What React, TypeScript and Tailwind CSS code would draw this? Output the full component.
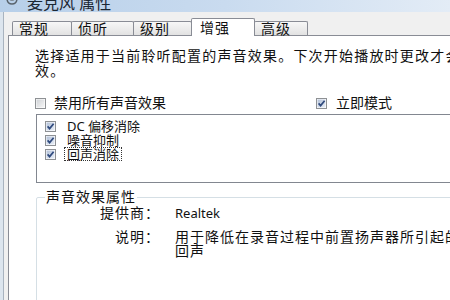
import React from 'react';

const Check = ({ checked }: { checked: boolean }) => (
  <svg width="11" height="11" viewBox="0 0 11 11" className="shrink-0">
    <defs>
      <linearGradient id={checked ? 'cbOn' : 'cbOff'} x1="0" y1="0" x2="1" y2="1">
        <stop offset="0" stopColor={checked ? '#b3c1d8' : '#cfd2d6'} />
        <stop offset="1" stopColor={checked ? '#e9eef6' : '#f6f6f6'} />
      </linearGradient>
    </defs>
    <rect x="0.5" y="0.5" width="10" height="10" fill="#fff" stroke="#8e9194" />
    <rect x="1.5" y="1.5" width="8" height="8" fill={`url(#${checked ? 'cbOn' : 'cbOff'})`} />
    {checked && (
      <path d="M2.6 5.4 L4.6 7.6 L8.6 2.8" fill="none" stroke="#2f4a7d" strokeWidth="1.7" />
    )}
  </svg>
);

const tabs = [
  { label: '常规', w: 'w-[60px]' },
  { label: '侦听', w: 'w-[63px]' },
  { label: '级别', w: 'w-[59px]' },
  { label: '增强', w: 'w-[64px]', active: true },
  { label: '高级', w: 'w-[54px]' },
];

const effects = ['DC 偏移消除', '噪音抑制', '回声消除'];

export default function App() {
  return (
    <div className="w-[450px] h-[300px] overflow-hidden bg-[#f0f0f0] text-[#111] font-['Noto_Sans','Noto_Sans_CJK_SC',sans-serif] flex flex-col">
      {/* title bar, top cut off */}
      <div className="h-[12px] shrink-0 flex items-end gap-[7px] pl-[4px] overflow-hidden bg-gradient-to-r from-[#b7cfe9] via-[#c9dbef] to-[#e3ecf6]">
        <svg width="16" height="16" viewBox="0 0 16 16" className="mb-[4px]">
          <rect x="5" y="0" width="6" height="9" rx="3" fill="#7d8790" />
          <path d="M3 6 Q3 12 8 12 Q13 12 13 6" fill="none" stroke="#59636c" strokeWidth="1.5" />
        </svg>
        <span className="text-[16px] leading-[16px] mb-[1px] text-[#1b2733] whitespace-nowrap">麦克风 属性</span>
      </div>

      <div className="flex-1 flex min-h-0">
        {/* window frame edge */}
        <div className="w-[8px] shrink-0 flex">
          <div className="w-[4px] bg-[#dce5ee] border-r border-[#a8b3bf]" />
          <div className="flex-1 bg-[#f0f0f0]" />
        </div>

        <div className="flex-1 flex flex-col min-w-0">
          {/* tabs */}
          <div className="flex items-end pl-[4px] pt-[6px] relative z-10 shrink-0">
            {tabs.map((t, i) =>
              t.active ? (
                <div
                  key={t.label}
                  className={`${t.w} -ml-px h-[18px] -mb-px bg-white border-t border-l border-r border-[#898c95] rounded-t-[2px] pl-[8px] pt-[2px] text-[14px] leading-[14px] tracking-[1px] whitespace-nowrap`}
                >
                  {t.label}
                </div>
              ) : (
                <div
                  key={t.label}
                  className={`${t.w} ${i === 0 ? '' : '-ml-px'} h-[14px] bg-gradient-to-b from-[#f7f7f7] to-[#e2e2e2] border-t border-l border-r border-[#898c95] rounded-t-[2px] pl-[6px] text-[14px] leading-[13px] tracking-[1px] whitespace-nowrap`}
                >
                  {t.label}
                </div>
              )
            )}
          </div>

          {/* tab page */}
          <div className="flex-1 w-[600px] bg-white border-t border-l border-[#898c95] pl-[26px] pt-[12px]">
            <p className="text-[14px] leading-[15px] tracking-[1.2px] whitespace-nowrap">
              选择适用于当前聆听配置的声音效果。下次开始播放时更改才会生
              <br />
              效。
            </p>

            <div className="mt-[17px] h-[16px] grid grid-cols-[281px_auto] items-center text-[14px] leading-[16px]">
              <label className="flex items-center gap-[8px] whitespace-nowrap">
                <Check checked={false} />
                禁用所有声音效果
              </label>
              <label className="flex items-center gap-[9px] whitespace-nowrap">
                <Check checked />
                立即模式
              </label>
            </div>

            <div className="mt-[3px] ml-[1px] h-[69px] border border-[#828790] pt-[4px] pl-[8px]">
              {effects.map((e, i) => (
                <div key={e} className="h-[14px] flex items-center gap-[8px] text-[13px] leading-[12px] whitespace-nowrap">
                  <Check checked />
                  <span className={`px-[2px] border ${i === 2 ? 'border-dotted border-[#333]' : 'border-transparent'}`}>{e}</span>
                </div>
              ))}
            </div>

            <fieldset className="mt-[7px] ml-[1px] h-[140px] border border-[#d5dfe5] p-0 m-0 rounded-[2px]">
              <legend className="ml-[8px] px-[1px] text-[14px] leading-[14px] tracking-[1px]">声音效果属性</legend>
              <div className="grid grid-cols-[123px_auto] gap-x-[15px] gap-y-[10px] pt-[2px] text-[14px] tracking-[1px]">
                <div className="text-right leading-[14px]">提供商：</div>
                <div className="text-[13px] leading-[14px] tracking-normal">Realtek</div>
                <div className="text-right leading-[14px]">说明：</div>
                <div className="leading-[14px] whitespace-nowrap">
                  用于降低在录音过程中前置扬声器所引起的
                  <br />
                  回声
                </div>
              </div>
            </fieldset>
          </div>
        </div>
      </div>
    </div>
  );
}
